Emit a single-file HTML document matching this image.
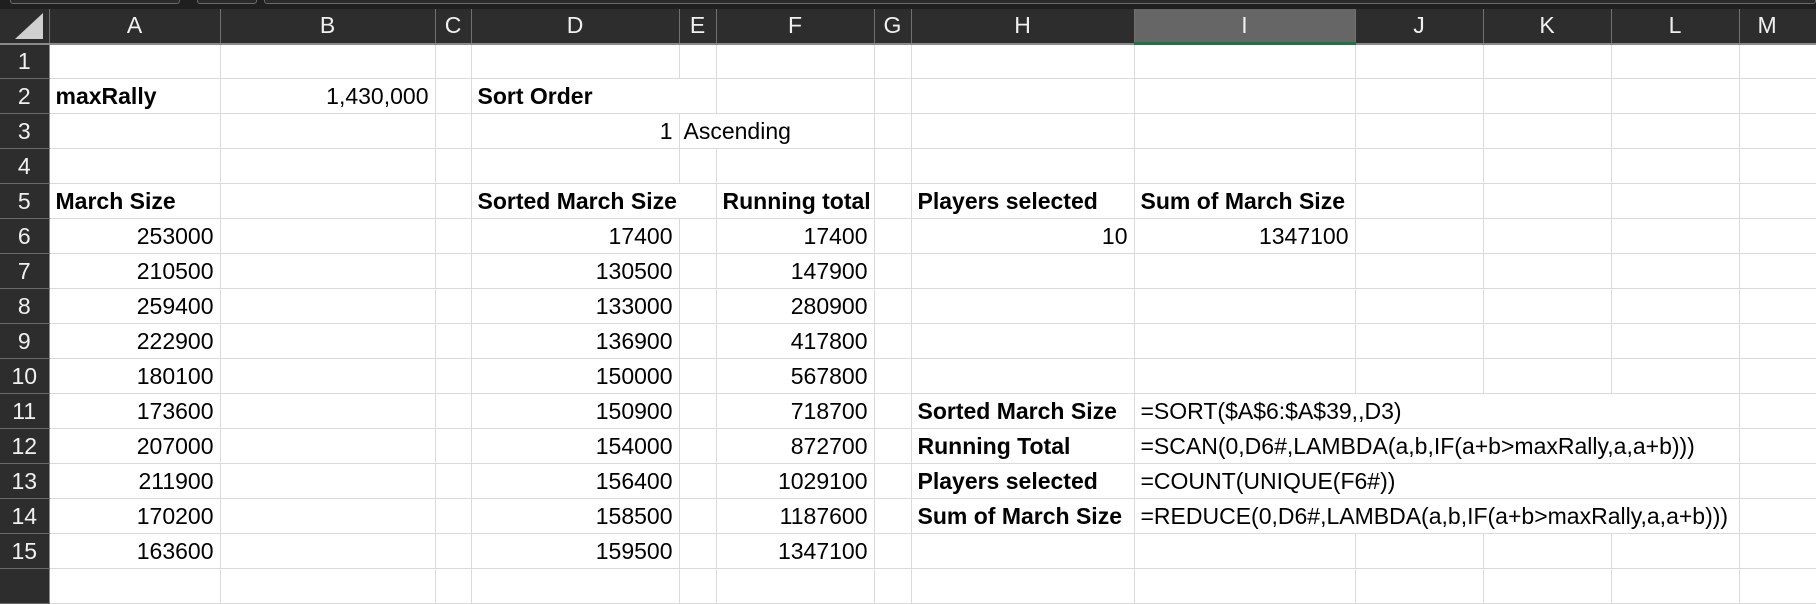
<!DOCTYPE html>
<html><head><meta charset="utf-8"><style>
*{margin:0;padding:0;box-sizing:border-box}
body{width:1816px;height:571px;overflow:hidden;background:#fff;font-family:"Liberation Sans",sans-serif;position:relative}
#top{position:absolute;left:0;top:0;width:1816px;height:9px;background:#1f1f1f}
.tab{position:absolute;top:-4px;height:8px;border:1px solid #6a6a6a;border-radius:3px;background:#2a2a2a}
table{position:absolute;left:0;top:9px;border-collapse:collapse;table-layout:fixed;width:1816px}
td{height:35px;border-right:1px solid #dadada;border-bottom:1px solid #dadada;font-size:23px;line-height:33px;white-space:nowrap;overflow:visible;padding:0 6px;color:#000}
tr.h td{height:34px;background:#2d2d2d;color:#f0f0f0;text-align:center;border-right:1px solid #707070;border-bottom:2px solid #8a8a8a;font-size:23px}
td.rh{background:#2d2d2d;color:#f0f0f0;text-align:center;border-right:1px solid #8a8a8a;border-bottom:1px solid #6a6a6a;padding:0}
td.sel{background:#666!important;border-bottom:3px solid #217346!important}
.r{text-align:right}
.b{font-weight:bold}
</style></head><body>
<div id="top"><div class="tab" style="left:10px;width:170px"></div><div class="tab" style="left:197px;width:60px"></div><div class="tab" style="left:264px;width:1552px"></div></div>
<table>
<colgroup><col style="width:49px"><col style="width:171px"><col style="width:215px"><col style="width:36px"><col style="width:208px"><col style="width:37px"><col style="width:158px"><col style="width:37px"><col style="width:223px"><col style="width:221px"><col style="width:128px"><col style="width:128px"><col style="width:128px"><col style="width:77px"></colgroup>
<tr class="h"><td style="position:relative"><svg width="36" height="26" style="position:absolute;right:6px;bottom:4px"><polygon points="36,0 36,26 8,26" fill="#d0d0d0"/></svg></td><td>A</td><td>B</td><td>C</td><td>D</td><td>E</td><td>F</td><td>G</td><td>H</td><td class="sel">I</td><td>J</td><td>K</td><td>L</td><td style="text-align:left;padding-left:18px">M</td></tr>
<tr><td class="rh">1</td><td></td><td></td><td></td><td></td><td></td><td></td><td></td><td></td><td></td><td></td><td></td><td></td><td></td></tr>
<tr><td class="rh">2</td><td class="b">maxRally</td><td class="r">1,430,000</td><td></td><td class="b" colspan="2">Sort Order</td><td></td><td></td><td></td><td></td><td></td><td></td><td></td><td></td></tr>
<tr><td class="rh">3</td><td></td><td></td><td></td><td class="r">1</td><td colspan="2" style="padding-left:4px">Ascending</td><td></td><td></td><td></td><td></td><td></td><td></td><td></td></tr>
<tr><td class="rh">4</td><td></td><td></td><td></td><td></td><td></td><td></td><td></td><td></td><td></td><td></td><td></td><td></td><td></td></tr>
<tr><td class="rh">5</td><td class="b">March Size</td><td></td><td></td><td class="b" colspan="2">Sorted March Size</td><td class="b r">Running total</td><td></td><td class="b">Players selected</td><td class="b">Sum of March Size</td><td></td><td></td><td></td><td></td></tr>
<tr><td class="rh">6</td><td class="r">253000</td><td></td><td></td><td class="r">17400</td><td></td><td class="r">17400</td><td></td><td class="r">10</td><td class="r">1347100</td><td></td><td></td><td></td><td></td></tr>
<tr><td class="rh">7</td><td class="r">210500</td><td></td><td></td><td class="r">130500</td><td></td><td class="r">147900</td><td></td><td></td><td></td><td></td><td></td><td></td><td></td></tr>
<tr><td class="rh">8</td><td class="r">259400</td><td></td><td></td><td class="r">133000</td><td></td><td class="r">280900</td><td></td><td></td><td></td><td></td><td></td><td></td><td></td></tr>
<tr><td class="rh">9</td><td class="r">222900</td><td></td><td></td><td class="r">136900</td><td></td><td class="r">417800</td><td></td><td></td><td></td><td></td><td></td><td></td><td></td></tr>
<tr><td class="rh">10</td><td class="r">180100</td><td></td><td></td><td class="r">150000</td><td></td><td class="r">567800</td><td></td><td></td><td></td><td></td><td></td><td></td><td></td></tr>
<tr><td class="rh">11</td><td class="r">173600</td><td></td><td></td><td class="r">150900</td><td></td><td class="r">718700</td><td></td><td class="b">Sorted March Size</td><td colspan="4">=SORT($A$6:$A$39,,D3)</td><td></td></tr>
<tr><td class="rh">12</td><td class="r">207000</td><td></td><td></td><td class="r">154000</td><td></td><td class="r">872700</td><td></td><td class="b">Running Total</td><td colspan="4">=SCAN(0,D6#,LAMBDA(a,b,IF(a+b&gt;maxRally,a,a+b)))</td><td></td></tr>
<tr><td class="rh">13</td><td class="r">211900</td><td></td><td></td><td class="r">156400</td><td></td><td class="r">1029100</td><td></td><td class="b">Players selected</td><td colspan="4">=COUNT(UNIQUE(F6#))</td><td></td></tr>
<tr><td class="rh">14</td><td class="r">170200</td><td></td><td></td><td class="r">158500</td><td></td><td class="r">1187600</td><td></td><td class="b">Sum of March Size</td><td colspan="4">=REDUCE(0,D6#,LAMBDA(a,b,IF(a+b&gt;maxRally,a,a+b)))</td><td></td></tr>
<tr><td class="rh">15</td><td class="r">163600</td><td></td><td></td><td class="r">159500</td><td></td><td class="r">1347100</td><td></td><td></td><td></td><td></td><td></td><td></td><td></td></tr>
<tr><td class="rh"></td><td></td><td></td><td></td><td></td><td></td><td></td><td></td><td></td><td></td><td></td><td></td><td></td><td></td></tr>
</table>
</body></html>
